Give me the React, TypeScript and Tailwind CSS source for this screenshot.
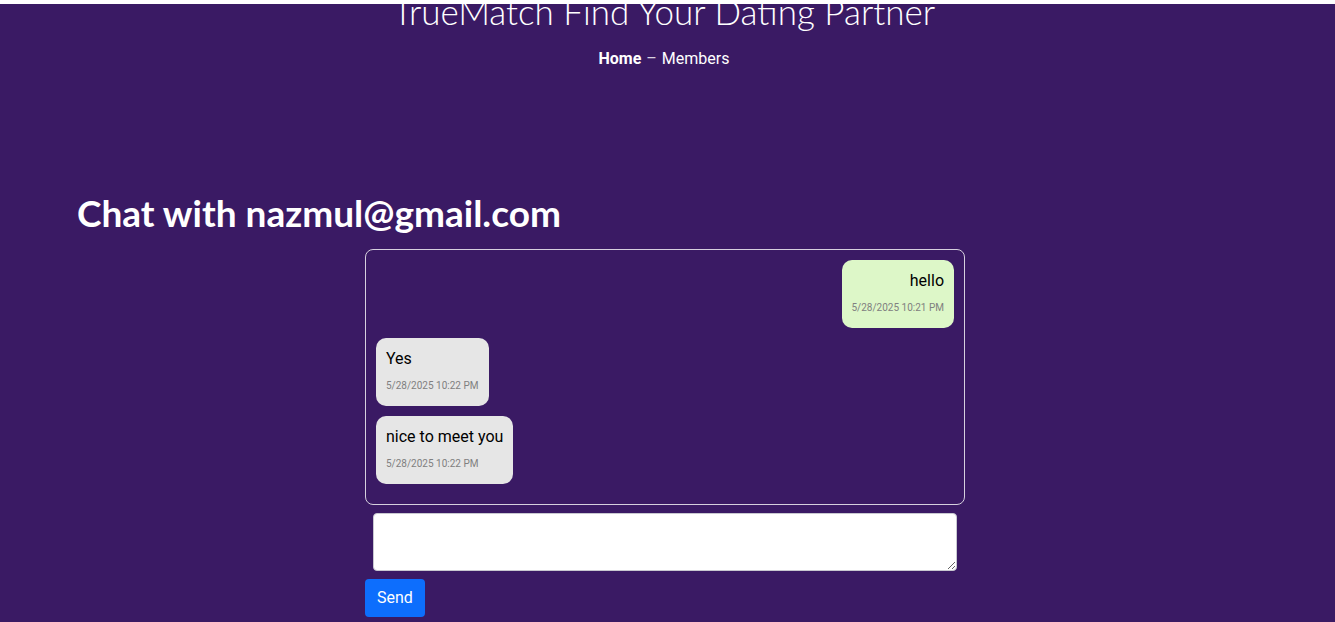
import { useState } from 'react';

type Msg = { text: string; time: string; mine: boolean };

const MESSAGES: Msg[] = [
  { text: 'hello', time: '5/28/2025 10:21 PM', mine: true },
  { text: 'Yes', time: '5/28/2025 10:22 PM', mine: false },
  { text: 'nice to meet you', time: '5/28/2025 10:22 PM', mine: false },
];

export default function App() {
  const [draft, setDraft] = useState('');

  return (
    <div className="relative min-h-[622px] bg-[#3a1a64] font-['Roboto',sans-serif] text-white overflow-hidden">
      {/* navbar edge */}
      <div className="absolute top-0 left-0 right-0 h-[4px] bg-white z-10" />

      {/* page banner */}
      <div className="text-center pr-[7px]">
        <h1 className="mt-[-10px] font-['Lato',sans-serif] font-light text-[35px] leading-[1.2]">
          TrueMatch Find Your Dating Partner
        </h1>
        <p className="mt-[15px] text-base leading-6">
          <span className="font-bold">Home</span>
          <span className="mx-[5px] text-white/80">–</span>
          Members
        </p>
      </div>

      {/* chat */}
      <h2 className="mt-[120px] px-[77px] font-['Lato',sans-serif] font-bold text-[37px] leading-[1.2]">
        Chat with nazmul@gmail.com
      </h2>

      <div className="flex justify-center pr-[5px] mt-[14px]">
        <div className="w-[600px]">
          <div className="h-[256px] border border-[#d6d0de] rounded-lg p-[10px] flex flex-col">
            {MESSAGES.map((m, i) => (
              <div key={i} className={m.mine ? 'flex justify-end mb-[10px]' : 'flex justify-start mb-[10px]'}>
                <div
                  className={
                    m.mine
                      ? 'bg-[#ddf7c8] text-black rounded-[10px] px-[10px] pt-[10px] pb-[13px] text-right'
                      : 'bg-[#e6e6e6] text-black rounded-[10px] px-[10px] pt-[10px] pb-[13px] text-left'
                  }
                >
                  <div className="text-base leading-[22px]">{m.text}</div>
                  <div className="mt-[9px] text-[10px] leading-[14px] text-[#808080]">{m.time}</div>
                </div>
              </div>
            ))}
          </div>

          <textarea
            value={draft}
            onChange={(e) => setDraft(e.target.value)}
            className="block mx-[8px] mt-[8px] w-[584px] h-[58px] bg-white border border-[#c8c8d0] rounded-[4px] text-black p-2"
          />

          <button className="mt-[8px] bg-[#0d6efd] text-white text-base leading-6 px-[12px] py-[7px] rounded-[4px]">
            Send
          </button>
        </div>
      </div>
    </div>
  );
}
